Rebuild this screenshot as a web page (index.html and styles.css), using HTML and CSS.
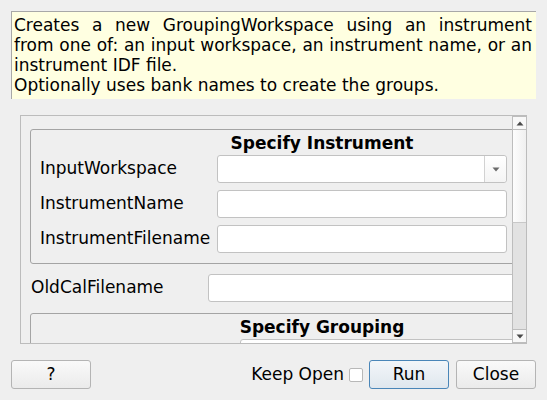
FILE: index.html
```html
<!DOCTYPE html>
<html>
<head>
<meta charset="utf-8">
<link rel="stylesheet" href="styles.css">
</head>
<body>
<div class="dialog">
  <div class="desc">
    <div class="jline">Creates a new GroupingWorkspace using an instrument</div>
    <div class="jline">from one of: an input workspace, an instrument name, or an</div>
    <div>instrument IDF file.</div>
    <div>Optionally uses bank names to create the groups.</div>
  </div>
  <div class="scroll">
    <div class="viewport">
      <div class="content">
        <div class="group">
          <div class="gtitle">Specify Instrument</div>
          <div class="rows">
            <div class="row"><span class="label">InputWorkspace</span><div class="field combo"><span class="drop"><svg width="8" height="5" viewBox="0 0 8 5"><path d="M0.5 0.5 L7.5 0.5 L4 4.5 Z" fill="#6a6a6a"/></svg></span></div></div>
            <div class="row"><span class="label">InstrumentName</span><div class="field"></div></div>
            <div class="row"><span class="label">InstrumentFilename</span><div class="field"></div></div>
          </div>
        </div>
        <div class="row outer"><span class="label">OldCalFilename</span><div class="field wide"></div></div>
        <div class="group g2">
          <div class="gtitle">Specify Grouping</div>
          <div class="rows">
            <div class="row"><span class="label"></span><div class="field"></div></div>
          </div>
        </div>
      </div>
    </div>
    <div class="scrollbar">
      <div class="sb-btn"><svg width="8" height="5" viewBox="0 0 8 5"><path d="M0.5 4.5 L7.5 4.5 L4 0.5 Z" fill="#4a4a4a"/></svg></div>
      <div class="sb-thumb"></div>
      <div class="sb-track"></div>
      <div class="sb-btn"><svg width="8" height="5" viewBox="0 0 8 5"><path d="M0.5 0.5 L7.5 0.5 L4 4.5 Z" fill="#4a4a4a"/></svg></div>
    </div>
  </div>
  <div class="footer">
    <button class="btn">?</button>
    <div class="spacer"></div>
    <span class="keep">Keep Open</span>
    <span class="check"></span>
    <button class="btn run">Run</button>
    <button class="btn">Close</button>
  </div>
</div>
</body>
</html>
```

FILE: styles.css
```css
html, body {
  margin: 0;
  padding: 0;
  background: #efefef;
}
body {
  font-family: "DejaVu Sans", sans-serif;
  font-size: 17px;
  color: #000;
  width: 547px;
  height: 400px;
  overflow: hidden;
}
.dialog {
  display: flex;
  flex-direction: column;
}
.desc {
  margin: 11px 0 0 11px;
  width: 518px;
  height: 84px;
  padding: 3px 4px 0 2px;
  border-top: 1px solid #a8a8a8;
  border-left: 1px solid #a8a8a8;
  background: #ffffe1;
  line-height: 20px;
  box-sizing: content-box;
  white-space: nowrap;
}
.jline {
  text-align: justify;
  text-align-last: justify;
}
.scroll {
  margin: 16px 0 0 20px;
  width: 505px;
  height: 227px;
  border: 1px solid #bcbcbc;
  display: flex;
}
.viewport {
  width: 491px;
  height: 227px;
  overflow: hidden;
}
.content {
  padding: 13px 0 0 9px;
  width: 600px;
}
.group {
  width: 467px;
  border: 1px solid #a4a4a4;
  border-radius: 3px;
  padding: 0 9px 10px 9px;
}
.gtitle {
  width: 564px;
  text-align: center;
  font-weight: bold;
  line-height: 20px;
  padding-top: 3px;
  margin-bottom: 2px;
}
.rows {
  display: flex;
  flex-direction: column;
  gap: 7px;
}
.row {
  display: flex;
  align-items: center;
  height: 28px;
}
.label {
  width: 177px;
  flex: none;
  line-height: 20px;
  margin-top: -2px;
}
.field {
  width: 288px;
  height: 26px;
  border: 1px solid #c2c2c2;
  border-radius: 3px;
  background: #fff;
  flex: none;
  display: flex;
  justify-content: flex-end;
}
.combo .drop {
  width: 21px;
  height: 26px;
  border-left: 1px solid #d2d2d2;
  display: flex;
  align-items: center;
  justify-content: center;
  background: linear-gradient(#ffffff, #f4f4f4);
  border-radius: 0 3px 3px 0;
}
.outer {
  margin-top: 10px;
  padding-left: 1px;
}
.wide {
  width: 320px;
}
.g2 {
  margin-top: 11px;
  height: 40px;
}
.g2 .label {
  width: 200px;
}
.scrollbar {
  width: 14px;
  display: flex;
  flex-direction: column;
  background: #e3e3e3;
}
.sb-btn {
  border: 1px solid #bdbdbd;
  border-right: none;
  background: #f8f8f8;
  display: flex;
  align-items: center;
  justify-content: center;
  box-sizing: border-box;
  height: 14px;
}
.sb-thumb {
  height: 93px;
  border-left: 1px solid #bdbdbd;
  border-bottom: 1px solid #c8c8c8;
  background: linear-gradient(90deg, #fdfdfd, #f0f0f0);
  box-sizing: border-box;
}
.sb-track {
  flex: 1;
  border-left: 1px solid #bdbdbd;
  background: #e2e2e2;
}
.footer {
  margin-top: 16px;
  padding: 0 11px;
  display: flex;
  align-items: center;
  height: 29px;
}
.spacer {
  flex: 1;
}
.btn {
  width: 80px;
  height: 29px;
  font-family: "DejaVu Sans", sans-serif;
  font-size: 17px;
  color: #000;
  border: 1px solid #b4b4b4;
  border-radius: 3px;
  background: linear-gradient(#f9f9f9, #ebebeb);
  padding: 0 0 2px 0;
  margin: 0;
}
.keep {
  line-height: 20px;
  margin-top: -2px;
}
.check {
  width: 12px;
  height: 12px;
  border: 1px solid #b8b8b8;
  border-radius: 2px;
  background: #fff;
  margin-left: 5px;
  margin-right: 6px;
}
.run {
  border-color: #4a86b8;
  background: linear-gradient(#f3f6f9, #dfe7ee);
  margin-right: 7px;
}
```
